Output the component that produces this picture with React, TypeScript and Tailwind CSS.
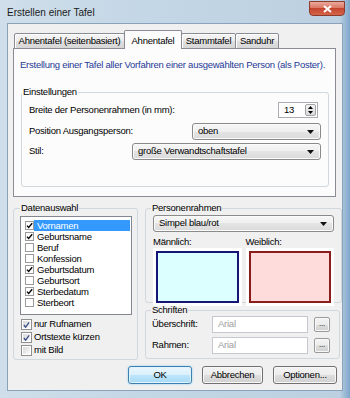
import React from 'react';

const btnBg = 'bg-[linear-gradient(#f3f3f3_0%,#ececec_50%,#dedede_50%,#d0d0d0_100%)]';
const comboBg = 'bg-[linear-gradient(#f6f6f6_0%,#efefef_50%,#e4e4e4_50%,#dadada_100%)]';

function Arrow() {
  return (
    <svg width="7" height="4" viewBox="0 0 7 4" className="shrink-0">
      <path d="M0 0h7L3.5 4z" fill="#111" />
    </svg>
  );
}

function Select({ value, width }: { value: string; width: string }) {
  return (
    <div className={`${width} h-[17px] border border-[#8a8a8a] rounded-[3px] ${comboBg} shadow-[inset_0_0_0_1px_#fbfbfb] flex items-center justify-between pl-[5px] pr-[6px]`}>
      <span>{value}</span>
      <Arrow />
    </div>
  );
}

function ListItem({ label, checked, selected }: { label: string; checked?: boolean; selected?: boolean }) {
  return (
    <div className="flex items-center h-[11px]">
      <span className="ml-[4px] w-[9px] h-[9px] border border-[#9a9a9a] bg-white flex items-center justify-center shrink-0">
        {checked && (
          <svg width="9" height="9" viewBox="0 0 9 9" className="-mt-[1px]">
            <path d="M1.2 4.6 L3.4 7 L8 1.6" fill="none" stroke="#000" strokeWidth="1.7" />
          </svg>
        )}
      </span>
      <span className={`flex-1 h-[11px] leading-[11px] pl-[3px] mr-[1px] ${selected ? 'bg-[#3399ff] text-white' : ''}`}>{label}</span>
    </div>
  );
}

function VistaCheck({ label, checked }: { label: string; checked?: boolean }) {
  return (
    <div className="flex items-center h-[13px]">
      <span className="w-[11px] h-[11px] border border-[#8f8f8f] bg-white p-[1px] shrink-0">
        <span className="w-full h-full bg-gradient-to-br from-[#d8d8d8] to-[#fafafa] flex items-center justify-center">
          {checked && (
            <svg width="8" height="8" viewBox="0 0 8 8">
              <path d="M1 4 L3 6.5 L7 1" fill="none" stroke="#3a4d85" strokeWidth="1.5" />
            </svg>
          )}
        </span>
      </span>
      <span className="ml-[2px]">{label}</span>
    </div>
  );
}

function Group({ title, className, children }: { title: string; className: string; children: React.ReactNode }) {
  return (
    <fieldset className={`border border-[#d0d7dd] rounded-[3px] ${className}`}>
      <legend className="px-[1px] leading-[12px]">{title}</legend>
      {children}
    </fieldset>
  );
}

function Tab({ label, active, width }: { label: string; active?: boolean; width: string }) {
  if (active) {
    return (
      <div className={`${width} h-[19px] -ml-[1px] relative z-10 border border-b-0 border-[#898c95] rounded-t-[2px] bg-[#fcfcfc] flex items-start justify-center pt-[3px]`}>
        {label}
      </div>
    );
  }
  return (
    <div className={`${width} h-[16px] -ml-[1px] first:ml-0 border border-[#898c95] rounded-t-[2px] bg-[linear-gradient(#f5f5f5_0%,#ececec_50%,#e0e0e0_50%,#d6d6d6_100%)] shadow-[inset_1px_1px_0_#fff] flex items-center justify-center`}>
      {label}
    </div>
  );
}

function Button({ label, width, focused }: { label: string; width: string; focused?: boolean }) {
  const look = focused
    ? 'border-[#3c7fb1] bg-[linear-gradient(#eaf6fd_0%,#d9f0fc_50%,#bee6fd_50%,#a7d9f5_100%)] shadow-[inset_0_0_0_1px_#dff4ff,0_0_2px_#7ec8f0]'
    : `border-[#707070] ${btnBg} shadow-[inset_0_0_0_1px_#f8f8f8]`;
  return (
    <div className={`${width} h-[18px] border rounded-[3px] ${look} flex items-center justify-center`}>{label}</div>
  );
}

function SmallButton() {
  return (
    <div className={`w-[16px] h-[15px] border border-[#9a9a9a] rounded-[2px] ${btnBg} shadow-[inset_0_0_0_1px_#f8f8f8] flex items-end justify-center pb-[3px] text-[8px] leading-none`}>
      ...
    </div>
  );
}

const App: React.FC = () => {
  return (
    <div className="w-[350px] h-[398px] overflow-hidden bg-[linear-gradient(90deg,#cfdeea_0%,#c4d7e6_40%,#bcd0e1_97%,#7ea6cb_100%)] font-['Liberation_Sans',Arial,sans-serif] text-[9.5px] tracking-[-0.25px] text-black flex flex-col">
      {/* Title bar */}
      <div className="h-[23px] shrink-0 flex items-start justify-between">
        <span className="ml-[7px] mt-[7px] text-[10px] tracking-normal leading-[12px] text-[#1b1b1b]">Erstellen einer Tafel</span>
        <div className="w-[36px] h-[15px] mr-[5px] mt-[1px] rounded-b-[4px] border border-[#8e3b2c] bg-[linear-gradient(#eaa99c_0%,#d9735f_50%,#c4462e_50%,#d5664a_100%)] flex items-center justify-center">
          <svg width="9" height="8" viewBox="0 0 9 8">
            <path d="M1 1 L8 7 M8 1 L1 7" stroke="#fff" strokeWidth="2" />
          </svg>
        </div>
      </div>

      {/* Client area */}
      <div className="mx-[7px] w-[336px] h-[368px] shrink-0 border border-[#8aa3ba] bg-[#f0f0f0] flex flex-col">
        {/* Tabs */}
        <div className="h-[25px] shrink-0 flex items-end pl-[6px]">
          <Tab label="Ahnentafel (seitenbasiert)" width="w-[111px]" />
          <Tab label="Ahnentafel" width="w-[58px]" active />
          <Tab label="Stammtafel" width="w-[55px]" />
          <Tab label="Sanduhr" width="w-[44px]" />
        </div>

        {/* Tab panel */}
        <div className="-mt-[1px] ml-[5px] w-[323px] h-[149px] shrink-0 border border-[#898c95] bg-[#fcfcfc] flex flex-col">
          <p className="mt-[10px] ml-[6px] leading-[12px] text-[#1e3a96]">
            Erstellung einer Tafel aller Vorfahren einer ausgewählten Person (als Poster).
          </p>
          <Group title="Einstellungen" className="mt-[15px] ml-[7px] w-[308px] pb-[26px]">
            <div className="px-[7px] pt-[4px] flex flex-col">
              <div className="h-[16px] flex items-center justify-between">
                <span>Breite der Personenrahmen (in mm):</span>
                <div className="mr-[3px] w-[40px] h-[16px] border border-[#abadb3] bg-white flex items-center justify-between pl-[5px] pr-[1px]">
                  <span>13</span>
                  <div className="w-[11px] h-[12px] border border-[#a5a5a5] rounded-[2px] bg-[linear-gradient(#f4f4f4,#dadada)] flex flex-col items-center justify-center gap-[2px]">
                    <svg width="5" height="3" viewBox="0 0 5 3"><path d="M0 3h5L2.5 0z" fill="#000" /></svg>
                    <svg width="5" height="3" viewBox="0 0 5 3"><path d="M0 0h5L2.5 3z" fill="#000" /></svg>
                  </div>
                </div>
              </div>
              <div className="mt-[5px] flex items-center justify-between">
                <span>Position Ausgangsperson:</span>
                <Select value="oben" width="w-[129px]" />
              </div>
              <div className="mt-[3px] flex items-center justify-between">
                <span>Stil:</span>
                <Select value="große Verwandtschaftstafel" width="w-[189px]" />
              </div>
            </div>
          </Group>
        </div>

        {/* Lower section */}
        <div className="mt-[5px] ml-[5px] flex gap-[7px]">
          <Group title="Datenauswahl" className="w-[125px] h-[158px] [&>legend]:ml-[6px]">
            <div className="mt-[2px] ml-[6px] w-[112px] h-[99px] border border-[#828790] bg-white pt-[3px]">
              <ListItem label="Vornamen" checked selected />
              <ListItem label="Geburtsname" checked />
              <ListItem label="Beruf" />
              <ListItem label="Konfession" />
              <ListItem label="Geburtsdatum" checked />
              <ListItem label="Geburtsort" />
              <ListItem label="Sterbedatum" checked />
              <ListItem label="Sterbeort" />
            </div>
            <div className="mt-[3px] ml-[7px] flex flex-col">
              <VistaCheck label="nur Rufnamen" checked />
              <VistaCheck label="Ortstexte kürzen" checked />
              <VistaCheck label="mit Bild" />
            </div>
          </Group>

          <div className="w-[195px] flex flex-col">
            <Group title="Personenrahmen" className="h-[101px] [&>legend]:ml-[5px]">
              <div className="px-[7px] pt-[1px]">
                <Select value="Simpel blau/rot" width="w-[181px]" />
                <div className="mt-[4px] grid grid-cols-2 gap-[4px]">
                  <div className="flex flex-col">
                    <span className="leading-[12px]">Männlich:</span>
                    <div className="mt-[0px] bg-white p-[3px]">
                      <div className="h-[52px] border-[2px] border-[#151578] bg-[#dcffff]" />
                    </div>
                  </div>
                  <div className="flex flex-col">
                    <span className="leading-[12px]">Weiblich:</span>
                    <div className="mt-[0px] bg-white p-[3px]">
                      <div className="h-[52px] border-[2px] border-[#8a1c1c] bg-[#ffdcdc]" />
                    </div>
                  </div>
                </div>
              </div>
            </Group>
            <Group title="Schriften" className="mt-[1px] h-[55px] [&>legend]:ml-[5px]">
              <div className="pl-[6px] pr-[9px] flex flex-col gap-[4px]">
                <div className="flex items-center">
                  <span className="w-[60px]">Überschrift:</span>
                  <div className="w-[96px] h-[17px] border border-[#c5c9cf] bg-white flex items-center pl-[5px] text-[#a0a0a0]">Arial</div>
                  <div className="ml-auto"><SmallButton /></div>
                </div>
                <div className="flex items-center">
                  <span className="w-[60px]">Rahmen:</span>
                  <div className="w-[96px] h-[17px] border border-[#c5c9cf] bg-white flex items-center pl-[5px] text-[#a0a0a0]">Arial</div>
                  <div className="ml-auto"><SmallButton /></div>
                </div>
              </div>
            </Group>
          </div>
        </div>

        {/* Dialog buttons */}
        <div className="mt-[6px] mr-[5px] flex justify-end gap-[10px]">
          <Button label="OK" width="w-[64px]" focused />
          <Button label="Abbrechen" width="w-[61px]" />
          <Button label="Optionen..." width="w-[64px]" />
        </div>
      </div>
    </div>
  );
};

export default App;
